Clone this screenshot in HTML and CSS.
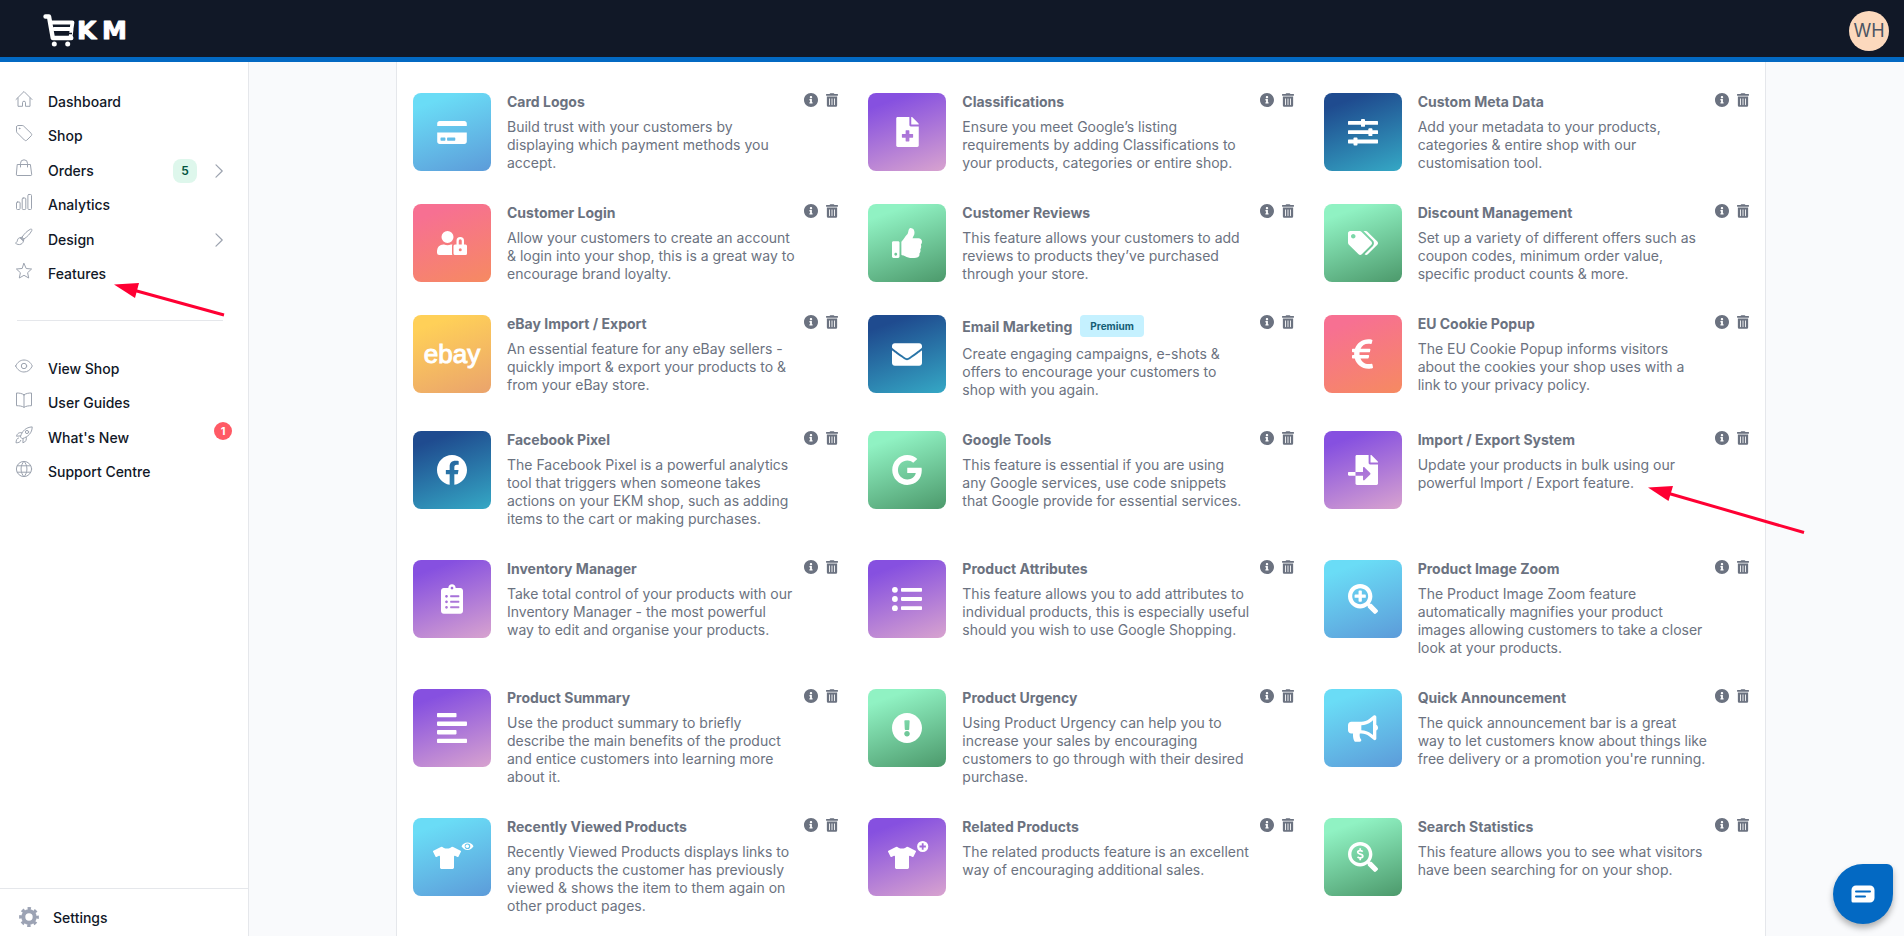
FILE: index.html
```html
<!DOCTYPE html>
<html lang="en">
<head>
<meta charset="utf-8">
<meta name="viewport" content="width=device-width, initial-scale=1">
<title>EKM - Features</title>
<link rel="stylesheet" href="styles.css">
</head>
<body>
<svg class="sprite" aria-hidden="true">
  <symbol id="info" viewBox="8 8 496 496"><path d="M256 8C119.043 8 8 119.083 8 256c0 136.997 111.043 248 248 248s248-111.003 248-248C504 119.083 392.957 8 256 8zm0 110c23.196 0 42 18.804 42 42s-18.804 42-42 42-42-18.804-42-42 18.804-42 42-42zm56 254c0 6.627-5.373 12-12 12h-88c-6.627 0-12-5.373-12-12v-24c0-6.627 5.373-12 12-12h12v-64h-12c-6.627 0-12-5.373-12-12v-24c0-6.627 5.373-12 12-12h64c6.627 0 12 5.373 12 12v100h12c6.627 0 12 5.373 12 12v24z"/></symbol>
  <symbol id="trash" viewBox="0 0 448 512"><path d="M32 464a48 48 0 0 0 48 48h288a48 48 0 0 0 48-48V128H32zm272-256a16 16 0 0 1 32 0v224a16 16 0 0 1-32 0zm-96 0a16 16 0 0 1 32 0v224a16 16 0 0 1-32 0zm-96 0a16 16 0 0 1 32 0v224a16 16 0 0 1-32 0zM432 32H312l-9.4-18.7A24 24 0 0 0 281.1 0H166.8a23.72 23.72 0 0 0-21.4 13.3L136 32H16A16 16 0 0 0 0 48v32a16 16 0 0 0 16 16h416a16 16 0 0 0 16-16V48a16 16 0 0 0-16-16z"/></symbol>
  <symbol id="shirt" viewBox="0 0 640 512"><path d="M631.2 96.5L436.5 0C416.4 27.8 371.9 47.2 320 47.2S223.6 27.8 203.5 0L8.8 96.5c-7.9 4-11.1 13.6-7.2 21.5l57.2 114.5c4 7.9 13.6 11.1 21.5 7.2l56.6-27.7c10.6-5.2 23 2.5 23 14.4V480c0 17.7 14.3 32 32 32h256c17.7 0 32-14.3 32-32V226.3c0-11.8 12.4-19.6 23-14.4l56.6 27.7c7.9 4 17.5.8 21.5-7.2L638.3 118c4-7.9.8-17.6-7.1-21.5z"/></symbol>
  <symbol id="chevron" viewBox="0 0 8 14"><path d="M1 .8 7.200 7 1 13.200" fill="none" stroke="currentColor" stroke-width="1.200" stroke-linecap="round" stroke-linejoin="round"/></symbol>
</svg>

<header class="topbar">
  <a class="brand" href="#" aria-label="EKM">
    <svg width="86" height="34" viewBox="0 0 86 34" aria-hidden="true">
      <g fill="none" stroke="#fff" stroke-linecap="round" stroke-linejoin="round">
        <path d="M2.500 2.500h3.500l3.800 21.500h18.500" stroke-width="4.400"/>
        <path d="M9 8.500h20.500l-1 6.500H11M28.600 15.500l-1.100 8" stroke-width="3.800"/>
      </g>
      <path d="M11 11.700h15.500M12 19.500h17" stroke="#111827" stroke-width="1.400"/>
      <circle cx="11.300" cy="30" r="2.500" fill="#fff"/><circle cx="24.700" cy="30" r="2.500" fill="#fff"/>
      <text class="brand-text" x="34 59" y="25">KM</text>
    </svg>
  </a>
  <button class="avatar" type="button" aria-label="Account">WH</button>
</header>

<div class="layout">
  <aside class="sidebar">
    <nav class="nav">
      <ul class="nav-list">
        <li><a class="nav-item" href="#"><svg class="nav-icon" viewBox="0 0 18 18"><path d="M1 9.500 9 1.500l8 8M3 8v8.300h4.500v-3.600a1.500 1.500 0 0 1 3 0v3.600H15V8"/></svg><span>Dashboard</span></a></li>
        <li><a class="nav-item" href="#"><svg class="nav-icon" viewBox="0 0 18 18"><path d="M1.500 3v4.200c0 .6.200 1.100.6 1.500l7.400 7.400c.7.700 1.700.7 2.400 0l4.300-4.300c.7-.7.700-1.700 0-2.400L8.700 2.100c-.4-.4-.9-.6-1.500-.6H3c-.8 0-1.500.7-1.500 1.500z"/><circle cx="4.500" cy="4.500" r=".4"/></svg><span>Shop</span></a></li>
        <li><a class="nav-item nav-item--tagged" href="#"><svg class="nav-icon" viewBox="0 0 18 18"><path d="M2.600 5.500h12.800l1.300 10c.1.500-.3 1-.8 1H2.100c-.5 0-.9-.5-.8-1zM5.500 8V4.300a3.500 3.500 0 0 1 7 0V8"/></svg><span>Orders</span><b class="count">5</b><svg class="chevron"><use href="#chevron"/></svg></a></li>
        <li><a class="nav-item" href="#"><svg class="nav-icon" viewBox="0 0 18 18"><rect x="1.500" y="9" width="3.600" height="7.500" rx="1"/><rect x="7.200" y="5" width="3.600" height="11.500" rx="1"/><rect x="12.900" y="1.500" width="3.600" height="15" rx="1"/></svg><span>Analytics</span></a></li>
        <li><a class="nav-item nav-item--tagged" href="#"><svg class="nav-icon" viewBox="0 0 18 18"><path d="M7 9.200C9.500 5.500 12 3 15.500 1.200c1-.5 1.800.4 1.300 1.300C15 6 12.500 8.700 8.900 11zM5.300 9.700 7 9.200l1.900 1.800-.4 1.800zM5.300 9.700c-1.600 0-2.500.9-2.800 2.400-.3 1.400-.7 2.300-2 3 1.300 1.300 3.700 2 5.600 1 1.500-.7 2.200-1.900 2.400-3.300z"/></svg><span>Design</span><svg class="chevron"><use href="#chevron"/></svg></a></li>
        <li><a class="nav-item" href="#"><svg class="nav-icon" viewBox="0 0 18 18"><path d="M9 1.500l2.200 5 5.400.5-4 3.700 1.100 5.300L9 13.300 4.300 16l1.100-5.300-4-3.700 5.400-.5z"/></svg><span>Features</span></a></li>
      </ul>
      <hr class="divider">
      <ul class="nav-list">
        <li><a class="nav-item" href="#"><svg class="nav-icon" viewBox="0 0 18 18"><path d="M.7 9C2.500 5 5.500 3 9 3s6.500 2 8.300 6c-1.800 4-4.800 6-8.300 6S2.500 13 .7 9z"/><circle cx="9" cy="9" r="2.700"/></svg><span>View Shop</span></a></li>
        <li><a class="nav-item" href="#"><svg class="nav-icon" viewBox="0 0 18 18"><path d="M9 3.800C7 2.400 4.500 2 1.500 2v12.700c3 0 5.500.4 7.500 1.600 2-1.200 4.500-1.600 7.500-1.600V2c-3 0-5.500.4-7.500 1.800zM9 3.800v12.500"/></svg><span>User Guides</span></a></li>
        <li><a class="nav-item nav-item--tagged" href="#"><svg class="nav-icon" viewBox="0 0 18 18"><path d="M5.500 10.500C7 5 11 1.200 17.200.9c-.1 6-4 10-9.700 11.700zM6.800 6.800c-2.500-.8-4.500.6-5.300 3.400l4-.3M11.200 11.200c.8 2.500-.5 4.800-3.300 5.600l.2-4.200M3.500 12c-1.800.3-2.300 2.300-2.500 4.800 2.500-.1 4.500-.5 4.800-2.400"/><circle cx="12" cy="6" r="1.600"/></svg><span>What's New</span><b class="alert">1</b></a></li>
        <li><a class="nav-item" href="#"><svg class="nav-icon" viewBox="0 0 18 18"><circle cx="9" cy="9" r="7.600"/><path d="M2.300 5.800h13.400M2.300 12.200h13.400M9 1.400C5 5 5 13 9 16.600M9 1.400c4 3.600 4 11.600 0 15.200"/></svg><span>Support Centre</span></a></li>
      </ul>
    </nav>
    <a class="settings" href="#">
      <svg width="20" height="20" viewBox="0 0 20 20" aria-hidden="true"><g fill="none" stroke="#9ca3b4"><circle cx="10" cy="10" r="5.700" stroke-width="4"/><circle cx="10" cy="10" r="8.300" stroke-width="3.200" stroke-dasharray="3.300 3.220" stroke-dashoffset="1.650"/></g></svg>
      <span>Settings</span>
    </a>
  </aside>

  <main class="main">
    <section class="panel">
      <article class="feature">
        <div class="tile tile--sky"><svg width="30" height="23" viewBox="0 32 576 448"><path d="M0 432c0 26.500 21.500 48 48 48h480c26.500 0 48-21.500 48-48V256H0v176zm192-68c0-6.600 5.400-12 12-12h136c6.600 0 12 5.400 12 12v40c0 6.600-5.400 12-12 12H204c-6.600 0-12-5.400-12-12v-40zm-128 0c0-6.600 5.400-12 12-12h72c6.600 0 12 5.400 12 12v40c0 6.600-5.400 12-12 12H76c-6.600 0-12-5.400-12-12v-40zM576 80v48H0V80c0-26.500 21.500-48 48-48h480c26.500 0 48 21.500 48 48z"/></svg></div>
        <div class="copy"><h3>Card Logos</h3><p>Build trust with your customers by displaying which payment methods you accept.</p></div>
        <div class="actions"><button type="button" aria-label="Information"><svg width="14" height="14"><use href="#info"/></svg></button><button type="button" aria-label="Delete"><svg width="12" height="14"><use href="#trash"/></svg></button></div>
      </article>
      <article class="feature">
        <div class="tile tile--violet"><svg width="23" height="30" viewBox="0 0 384 512"><path d="M384 121.900v6.100H256V0h6.100c6.400 0 12.500 2.500 17 7l97.900 98c4.500 4.500 7 10.600 7 16.900zM224 136V0H24C10.700 0 0 10.700 0 24v464c0 13.300 10.700 24 24 24h336c13.300 0 24-10.700 24-24V160H248c-13.200 0-24-10.800-24-24zm64 160v48c0 4.400-3.600 8-8 8h-56v56c0 4.400-3.600 8-8 8h-48c-4.400 0-8-3.600-8-8v-56h-56c-4.400 0-8-3.600-8-8v-48c0-4.400 3.600-8 8-8h56v-56c0-4.400 3.600-8 8-8h48c4.400 0 8 3.600 8 8v56h56c4.400 0 8 3.600 8 8z"/></svg></div>
        <div class="copy"><h3>Classifications</h3><p>Ensure you meet Google’s listing requirements by adding Classifications to your products, categories or entire shop.</p></div>
        <div class="actions"><button type="button" aria-label="Information"><svg width="14" height="14"><use href="#info"/></svg></button><button type="button" aria-label="Delete"><svg width="12" height="14"><use href="#trash"/></svg></button></div>
      </article>
      <article class="feature">
        <div class="tile tile--navy"><svg width="30" height="30" viewBox="0 0 30 30"><rect y="4" width="30" height="3.800" rx=".6"/><rect y="13.300" width="30" height="3.800" rx=".6"/><rect y="22.600" width="30" height="3.800" rx=".6"/><rect x="13" y="2" width="4" height="7.800" rx=".9"/><rect x="20.400" y="11.300" width="4" height="7.800" rx=".9"/><rect x="5.500" y="20.600" width="4" height="7.800" rx=".9"/></svg></div>
        <div class="copy"><h3>Custom Meta Data</h3><p>Add your metadata to your products, categories &amp; entire shop with our customisation tool.</p></div>
        <div class="actions"><button type="button" aria-label="Information"><svg width="14" height="14"><use href="#info"/></svg></button><button type="button" aria-label="Delete"><svg width="12" height="14"><use href="#trash"/></svg></button></div>
      </article>

      <article class="feature">
        <div class="tile tile--pink"><svg width="30" height="24" viewBox="0 0 640 512"><path d="M224 256A128 128 0 1 0 96 128a128 128 0 0 0 128 128zm96 64a63.080 63.080 0 0 1 8.100-30.500c-4.800-.5-9.500-1.500-14.500-1.500h-16.700a174.080 174.080 0 0 1-145.800 0h-16.700A134.430 134.430 0 0 0 0 422.400V464a48 48 0 0 0 48 48h280.900a63.540 63.540 0 0 1-8.900-32zm288-32h-32v-80a80 80 0 0 0-160 0v80h-32a32 32 0 0 0-32 32v160a32 32 0 0 0 32 32h224a32 32 0 0 0 32-32V320a32 32 0 0 0-32-32zM496 432a32 32 0 1 1 32-32 32 32 0 0 1-32 32zm32-144h-64v-80a32 32 0 0 1 64 0z"/></svg></div>
        <div class="copy"><h3>Customer Login</h3><p>Allow your customers to create an account &amp; login into your shop, this is a great way to encourage brand loyalty.</p></div>
        <div class="actions"><button type="button" aria-label="Information"><svg width="14" height="14"><use href="#info"/></svg></button><button type="button" aria-label="Delete"><svg width="12" height="14"><use href="#trash"/></svg></button></div>
      </article>
      <article class="feature">
        <div class="tile tile--green"><svg width="30" height="30" viewBox="0 0 512 512"><path d="M104 224H24c-13.255 0-24 10.745-24 24v240c0 13.255 10.745 24 24 24h80c13.255 0 24-10.745 24-24V248c0-13.255-10.745-24-24-24zM64 472c-13.255 0-24-10.745-24-24s10.745-24 24-24 24 10.745 24 24-10.745 24-24 24zM384 81.452c0 42.416-25.970 66.208-33.277 94.548h101.723c33.397 0 59.397 27.746 59.553 58.098.084 17.938-7.546 37.249-19.439 49.197l-.11.11c9.836 23.337 8.237 56.037-9.308 79.469 8.681 25.895-.069 57.704-16.382 74.757 4.298 17.598 2.244 32.575-6.148 44.632C440.202 511.587 389.616 512 346.839 512l-2.845-.001c-48.287-.017-87.806-17.598-119.560-31.725-15.957-7.099-36.821-15.887-52.651-16.178-6.540-.12-11.783-5.457-11.783-11.998v-213.770c0-3.200 1.282-6.271 3.558-8.521 39.614-39.144 56.648-80.587 89.117-113.111 14.804-14.832 20.188-37.236 25.393-58.902C282.515 39.293 291.817 0 312 0c24 0 72 8 72 81.452z"/></svg></div>
        <div class="copy"><h3>Customer Reviews</h3><p>This feature allows your customers to add reviews to products they’ve purchased through your store.</p></div>
        <div class="actions"><button type="button" aria-label="Information"><svg width="14" height="14"><use href="#info"/></svg></button><button type="button" aria-label="Delete"><svg width="12" height="14"><use href="#trash"/></svg></button></div>
      </article>
      <article class="feature">
        <div class="tile tile--green"><svg width="30" height="24" viewBox="0 0 640 512"><path d="M497.941 225.941L286.059 14.059A48 48 0 0 0 252.118 0H48C21.490 0 0 21.490 0 48v204.118a48 48 0 0 0 14.059 33.941l211.882 211.882c18.744 18.745 49.136 18.746 67.882 0l204.118-204.118c18.745-18.745 18.745-49.137 0-67.882zM112 160c-26.510 0-48-21.490-48-48s21.490-48 48-48 48 21.490 48 48-21.490 48-48 48zm513.941 133.823L421.823 497.941c-18.745 18.745-49.137 18.745-67.882 0l-.36-.36L527.640 323.522c16.999-16.999 26.362-39.600 26.362-63.640s-9.362-46.641-26.362-63.640L331.397 0h48.721a48 48 0 0 1 33.941 14.059l211.882 211.882c18.745 18.745 18.745 49.137 0 67.882z"/></svg></div>
        <div class="copy"><h3>Discount Management</h3><p>Set up a variety of different offers such as coupon codes, minimum order value, specific product counts &amp; more.</p></div>
        <div class="actions"><button type="button" aria-label="Information"><svg width="14" height="14"><use href="#info"/></svg></button><button type="button" aria-label="Delete"><svg width="12" height="14"><use href="#trash"/></svg></button></div>
      </article>

      <article class="feature">
        <div class="tile tile--amber"><span class="ebay">ebay</span></div>
        <div class="copy"><h3>eBay Import / Export</h3><p>An essential feature for any eBay sellers - quickly import &amp; export your products to &amp; from your eBay store.</p></div>
        <div class="actions"><button type="button" aria-label="Information"><svg width="14" height="14"><use href="#info"/></svg></button><button type="button" aria-label="Delete"><svg width="12" height="14"><use href="#trash"/></svg></button></div>
      </article>
      <article class="feature">
        <div class="tile tile--navy"><svg width="30" height="23" viewBox="0 64 512 384"><path d="M502.300 190.800c3.900-3.100 9.700-.2 9.700 4.700V400c0 26.500-21.500 48-48 48H48c-26.500 0-48-21.500-48-48V195.600c0-5 5.700-7.800 9.700-4.700 22.400 17.400 52.100 39.500 154.100 113.600 21.100 15.400 56.700 47.800 92.200 47.600 35.700.3 72-32.800 92.300-47.600 102-74.100 131.600-96.300 154-113.700zM256 320c23.200.4 56.600-29.200 73.400-41.400 132.700-96.300 142.800-104.700 173.400-128.700 5.800-4.500 9.200-11.500 9.200-18.900v-19c0-26.500-21.500-48-48-48H48c-26.500 0-48 21.500-48 48v19c0 7.400 3.400 14.300 9.200 18.900 30.600 23.900 40.700 32.400 173.400 128.700 16.800 12.200 50.200 41.800 73.400 41.400z"/></svg></div>
        <div class="copy"><h3>Email Marketing <span class="premium">Premium</span></h3><p>Create engaging campaigns, e-shots &amp; offers to encourage your customers to shop with you again.</p></div>
        <div class="actions"><button type="button" aria-label="Information"><svg width="14" height="14"><use href="#info"/></svg></button><button type="button" aria-label="Delete"><svg width="12" height="14"><use href="#trash"/></svg></button></div>
      </article>
      <article class="feature">
        <div class="tile tile--pink"><svg width="21" height="30" viewBox="0 32 320 448"><path d="M310.706 413.765c-1.314-6.630-7.835-10.872-14.424-9.369-10.692 2.439-27.422 5.413-45.426 5.413-56.763 0-101.929-34.790-121.461-85.449h113.689a12 12 0 0 0 11.708-9.369l6.373-28.360c1.686-7.502-4.019-14.631-11.708-14.631H115.220c-1.210-14.328-1.414-28.287.137-42.245H261.950a12 12 0 0 0 11.723-9.434l6.512-29.755c1.638-7.484-4.061-14.566-11.723-14.566H130.184c20.633-44.991 62.690-75.030 117.619-75.030 14.486 0 28.564 2.250 37.851 4.145 6.216 1.268 12.347-2.498 14.002-8.623l11.991-44.368c1.822-6.741-2.465-13.616-9.326-14.917C290.217 34.912 270.710 32 249.635 32 152.451 32 74.030 92.252 45.075 176H12c-6.627 0-12 5.373-12 12v29.755c0 6.627 5.373 12 12 12h21.569c-1.009 13.607-1.181 29.287-.181 42.245H12c-6.627 0-12 5.373-12 12v28.360c0 6.627 5.373 12 12 12h30.114C67.139 414.692 145.264 480 249.635 480c26.301 0 48.562-4.544 61.101-7.788 6.167-1.595 10.027-7.708 8.788-13.957l-8.818-44.490z"/></svg></div>
        <div class="copy"><h3>EU Cookie Popup</h3><p>The EU Cookie Popup informs visitors about the cookies your shop uses with a link to your privacy policy.</p></div>
        <div class="actions"><button type="button" aria-label="Information"><svg width="14" height="14"><use href="#info"/></svg></button><button type="button" aria-label="Delete"><svg width="12" height="14"><use href="#trash"/></svg></button></div>
      </article>

      <article class="feature">
        <div class="tile tile--navy"><svg width="30" height="30" viewBox="8 8 496 496"><path d="M504 256C504 119 393 8 256 8S8 119 8 256c0 123.780 90.690 226.380 209.250 245V327.690h-63V256h63v-54.640c0-62.150 37-96.480 93.670-96.480 27.140 0 55.520 4.840 55.520 4.840v61h-31.280c-30.800 0-40.410 19.120-40.410 38.730V256h68.780l-11 71.690h-57.780V501C413.310 482.380 504 379.780 504 256z"/></svg></div>
        <div class="copy"><h3>Facebook Pixel</h3><p>The Facebook Pixel is a powerful analytics tool that triggers when someone takes actions on your EKM shop, such as adding items to the cart or making purchases.</p></div>
        <div class="actions"><button type="button" aria-label="Information"><svg width="14" height="14"><use href="#info"/></svg></button><button type="button" aria-label="Delete"><svg width="12" height="14"><use href="#trash"/></svg></button></div>
      </article>
      <article class="feature">
        <div class="tile tile--green"><svg width="30" height="30" viewBox="0 8 488 496"><path d="M488 261.800C488 403.300 391.100 504 248 504 110.800 504 0 393.200 0 256S110.800 8 248 8c66.800 0 123 24.500 166.300 64.900l-67.500 64.900C258.500 52.600 94.300 116.600 94.300 256c0 86.500 69.100 156.600 153.700 156.600 98.200 0 135-70.400 140.800-106.900H248v-85.300h236.100c2.300 12.700 3.900 24.900 3.900 41.400z"/></svg></div>
        <div class="copy"><h3>Google Tools</h3><p>This feature is essential if you are using<br>any Google services, use code snippets that Google provide for essential services.</p></div>
        <div class="actions"><button type="button" aria-label="Information"><svg width="14" height="14"><use href="#info"/></svg></button><button type="button" aria-label="Delete"><svg width="12" height="14"><use href="#trash"/></svg></button></div>
      </article>
      <article class="feature">
        <div class="tile tile--violet"><svg width="30" height="30" viewBox="0 0 512 512"><path d="M16 288c-8.800 0-16 7.200-16 16v32c0 8.800 7.200 16 16 16h112v-64zm489-183L407.100 7c-4.500-4.500-10.600-7-17-7H384v128h128v-6.100c0-6.300-2.500-12.400-7-16.900zm-153 31V0H152c-13.300 0-24 10.700-24 24v264h128v-65.200c0-14.300 17.300-21.400 27.400-11.300L379 308c6.600 6.700 6.600 17.400 0 24l-95.700 96.400c-10.100 10.100-27.400 3-27.400-11.300V352H128v136c0 13.300 10.700 24 24 24h336c13.300 0 24-10.700 24-24V160H376c-13.200 0-24-10.800-24-24z"/></svg></div>
        <div class="copy"><h3>Import / Export System</h3><p>Update your products in bulk using our powerful Import / Export feature.</p></div>
        <div class="actions"><button type="button" aria-label="Information"><svg width="14" height="14"><use href="#info"/></svg></button><button type="button" aria-label="Delete"><svg width="12" height="14"><use href="#trash"/></svg></button></div>
      </article>

      <article class="feature">
        <div class="tile tile--violet"><svg width="22" height="30" viewBox="0 0 384 512"><path d="M336 64h-80c0-35.300-28.700-64-64-64s-64 28.700-64 64H48C21.500 64 0 85.500 0 112v352c0 26.500 21.500 48 48 48h288c26.500 0 48-21.500 48-48V112c0-26.500-21.500-48-48-48zM96 424c-13.300 0-24-10.700-24-24s10.700-24 24-24 24 10.700 24 24-10.700 24-24 24zm0-96c-13.300 0-24-10.700-24-24s10.700-24 24-24 24 10.700 24 24-10.700 24-24 24zm0-96c-13.300 0-24-10.700-24-24s10.700-24 24-24 24 10.700 24 24-10.700 24-24 24zm96-192c13.300 0 24 10.700 24 24s-10.700 24-24 24-24-10.700-24-24 10.700-24 24-24zm128 368c0 4.400-3.600 8-8 8H168c-4.400 0-8-3.600-8-8v-16c0-4.400 3.600-8 8-8h144c4.400 0 8 3.600 8 8v16zm0-96c0 4.400-3.600 8-8 8H168c-4.400 0-8-3.600-8-8v-16c0-4.400 3.600-8 8-8h144c4.400 0 8 3.600 8 8v16zm0-96c0 4.400-3.600 8-8 8H168c-4.400 0-8-3.600-8-8v-16c0-4.400 3.600-8 8-8h144c4.400 0 8 3.600 8 8v16z"/></svg></div>
        <div class="copy"><h3>Inventory Manager</h3><p>Take total control of your products with our Inventory Manager - the most powerful<br>way to edit and organise your products.</p></div>
        <div class="actions"><button type="button" aria-label="Information"><svg width="14" height="14"><use href="#info"/></svg></button><button type="button" aria-label="Delete"><svg width="12" height="14"><use href="#trash"/></svg></button></div>
      </article>
      <article class="feature">
        <div class="tile tile--violet"><svg width="30" height="30" viewBox="0 0 30 30"><circle cx="2.900" cy="5.800" r="2.900"/><circle cx="2.900" cy="15" r="2.900"/><circle cx="2.900" cy="24.200" r="2.900"/><rect x="9" y="3.900" width="21" height="3.800" rx=".8"/><rect x="9" y="13.100" width="21" height="3.800" rx=".8"/><rect x="9" y="22.300" width="21" height="3.800" rx=".8"/></svg></div>
        <div class="copy"><h3>Product Attributes</h3><p>This feature allows you to add attributes to individual products, this is especially useful should you wish to use Google Shopping.</p></div>
        <div class="actions"><button type="button" aria-label="Information"><svg width="14" height="14"><use href="#info"/></svg></button><button type="button" aria-label="Delete"><svg width="12" height="14"><use href="#trash"/></svg></button></div>
      </article>
      <article class="feature">
        <div class="tile tile--sky"><svg width="30" height="30" viewBox="0 0 512 512"><path d="M304 192v32c0 6.600-5.400 12-12 12h-56v56c0 6.600-5.400 12-12 12h-32c-6.600 0-12-5.400-12-12v-56h-56c-6.600 0-12-5.400-12-12v-32c0-6.600 5.400-12 12-12h56v-56c0-6.600 5.400-12 12-12h32c6.600 0 12 5.400 12 12v56h56c6.600 0 12 5.400 12 12zm201 284.700L476.700 505c-9.400 9.400-24.600 9.400-33.900 0L343 405.300c-4.500-4.500-7-10.600-7-17V372c-35.300 27.600-79.700 44-128 44C93.100 416 0 322.900 0 208S93.100 0 208 0s208 93.100 208 208c0 48.300-16.400 92.700-44 128h16.300c6.400 0 12.500 2.500 17 7l99.700 99.700c9.300 9.400 9.300 24.600 0 34zM344 208c0-75.200-60.800-136-136-136S72 132.800 72 208s60.800 136 136 136 136-60.800 136-136z"/></svg></div>
        <div class="copy"><h3>Product Image Zoom</h3><p>The Product Image Zoom feature automatically magnifies your product images allowing customers to take a closer look at your products.</p></div>
        <div class="actions"><button type="button" aria-label="Information"><svg width="14" height="14"><use href="#info"/></svg></button><button type="button" aria-label="Delete"><svg width="12" height="14"><use href="#trash"/></svg></button></div>
      </article>

      <article class="feature">
        <div class="tile tile--violet"><svg width="30" height="30" viewBox="0 0 30 30"><rect width="19.500" height="4.300" rx=".8"/><rect y="8.600" width="30" height="4.300" rx=".8"/><rect y="17.100" width="19.500" height="4.300" rx=".8"/><rect y="25.700" width="30" height="4.300" rx=".8"/></svg></div>
        <div class="copy"><h3>Product Summary</h3><p>Use the product summary to briefly describe the main benefits of the product and entice customers into learning more about it.</p></div>
        <div class="actions"><button type="button" aria-label="Information"><svg width="14" height="14"><use href="#info"/></svg></button><button type="button" aria-label="Delete"><svg width="12" height="14"><use href="#trash"/></svg></button></div>
      </article>
      <article class="feature">
        <div class="tile tile--green"><svg width="30" height="30" viewBox="8 8 496 496"><path d="M504 256c0 136.997-111.043 248-248 248S8 392.997 8 256C8 119.083 119.043 8 256 8s248 111.083 248 248zm-248 50c-25.405 0-46 20.595-46 46s20.595 46 46 46 46-20.595 46-46-20.595-46-46-46zm-43.673-165.346l7.418 136c.347 6.364 5.609 11.346 11.982 11.346h48.546c6.373 0 11.635-4.982 11.982-11.346l7.418-136c.375-6.874-5.098-12.654-11.982-12.654h-63.383c-6.884 0-12.356 5.780-11.981 12.654z"/></svg></div>
        <div class="copy"><h3>Product Urgency</h3><p>Using Product Urgency can help you to increase your sales by encouraging customers to go through with their desired purchase.</p></div>
        <div class="actions"><button type="button" aria-label="Information"><svg width="14" height="14"><use href="#info"/></svg></button><button type="button" aria-label="Delete"><svg width="12" height="14"><use href="#trash"/></svg></button></div>
      </article>
      <article class="feature">
        <div class="tile tile--sky"><svg width="30" height="27" viewBox="0 0 576 512"><path d="M576 240c0-23.630-12.950-44.040-32-55.120V32.010C544 23.260 537.020 0 512 0c-7.120 0-14.190 2.380-19.980 7.020l-85.030 68.030C364.280 109.190 310.660 128 256 128H64c-35.350 0-64 28.650-64 64v96c0 35.350 28.650 64 64 64h33.700c-1.390 10.480-2.180 21.140-2.180 32 0 39.770 9.260 77.350 25.560 110.940 5.190 10.690 16.520 17.060 28.400 17.060h74.280c26.050 0 41.690-29.840 25.900-50.560-16.400-21.520-26.150-48.360-26.150-77.440 0-11.110 1.620-21.790 4.410-32H256c54.660 0 108.280 18.810 150.980 52.950l85.030 68.030a32.023 32.023 0 0 0 19.980 7.020c24.920 0 32-22.780 32-32V295.130C563.050 284.040 576 263.630 576 240zm-96 141.420l-33.050-26.440C392.950 311.780 325.120 288 256 288v-96c69.120 0 136.950-23.780 190.950-66.980L480 98.580v282.840z"/></svg></div>
        <div class="copy"><h3>Quick Announcement</h3><p>The quick announcement bar is a great<br>way to let customers know about things like free delivery or a promotion you're running.</p></div>
        <div class="actions"><button type="button" aria-label="Information"><svg width="14" height="14"><use href="#info"/></svg></button><button type="button" aria-label="Delete"><svg width="12" height="14"><use href="#trash"/></svg></button></div>
      </article>

      <article class="feature">
        <div class="tile tile--sky"><svg width="78" height="78" viewBox="0 0 78 78"><use href="#shirt" x="20" y="28.500" width="28" height="22.400"/><path fill-rule="evenodd" d="M48.500 28.300c1.400-2.400 3.500-3.700 6-3.700s4.600 1.300 6 3.700c-1.400 2.400-3.500 3.700-6 3.700s-4.600-1.300-6-3.700zm6-2.800a2.800 2.800 0 1 0 0 5.600 2.800 2.800 0 0 0 0-5.600z"/><circle cx="54.300" cy="28.300" r="1.700"/></svg></div>
        <div class="copy"><h3>Recently Viewed Products</h3><p>Recently Viewed Products displays links to any products the customer has previously viewed &amp; shows the item to them again on other product pages.</p></div>
        <div class="actions"><button type="button" aria-label="Information"><svg width="14" height="14"><use href="#info"/></svg></button><button type="button" aria-label="Delete"><svg width="12" height="14"><use href="#trash"/></svg></button></div>
      </article>
      <article class="feature">
        <div class="tile tile--violet"><svg width="78" height="78" viewBox="0 0 78 78"><use href="#shirt" x="20" y="28.500" width="28" height="22.400"/><path fill-rule="evenodd" d="M54.700 22.900a5.600 5.600 0 1 0 0 11.200 5.600 5.600 0 0 0 0-11.200zm-.9 2.400h1.800v2.300h2.300v1.800h-2.300v2.300h-1.800v-2.300h-2.300v-1.800h2.300z"/></svg></div>
        <div class="copy"><h3>Related Products</h3><p>The related products feature is an excellent way of encouraging additional sales.</p></div>
        <div class="actions"><button type="button" aria-label="Information"><svg width="14" height="14"><use href="#info"/></svg></button><button type="button" aria-label="Delete"><svg width="12" height="14"><use href="#trash"/></svg></button></div>
      </article>
      <article class="feature">
        <div class="tile tile--green"><svg width="30" height="30" viewBox="0 0 512 512"><path d="M505 476.700L476.700 505c-9.400 9.400-24.600 9.400-33.900 0L343 405.300c-4.500-4.500-7-10.600-7-17V372c-35.300 27.600-79.700 44-128 44C93.100 416 0 322.900 0 208S93.100 0 208 0s208 93.100 208 208c0 48.300-16.400 92.700-44 128h16.300c6.400 0 12.500 2.500 17 7l99.700 99.700c9.300 9.400 9.300 24.600 0 34zM358 208c0-83-67-150-150-150S58 125 58 208s67 150 150 150 150-67 150-150z"/><path d="M252 165c-14-13-29-17-46-17-24 0-40 11-40 29 0 40 87 22 87 64 0 19-17 31-42 31-20 0-35-6-49-19M208 106v42M208 270v42" fill="none" stroke="#fff" stroke-width="30"/></svg></div>
        <div class="copy"><h3>Search Statistics</h3><p>This feature allows you to see what visitors have been searching for on your shop.</p></div>
        <div class="actions"><button type="button" aria-label="Information"><svg width="14" height="14"><use href="#info"/></svg></button><button type="button" aria-label="Delete"><svg width="12" height="14"><use href="#trash"/></svg></button></div>
      </article>
    </section>
  </main>
</div>

<svg class="arrow arrow--features" width="112" height="36" viewBox="0 0 112 36" aria-hidden="true"><path d="M1 3.500 26 2l-4 15z" fill="#ff0033"/><path d="M22 9.500l89 24.500" stroke="#ff0033" stroke-width="3"/></svg>
<svg class="arrow arrow--import" width="160" height="52" viewBox="0 0 160 52" aria-hidden="true"><path d="M1 2.500 26 1l-4.500 15z" fill="#ff0033"/><path d="M22 8.500l135 39" stroke="#ff0033" stroke-width="3"/></svg>

<button class="chat" type="button" aria-label="Open chat">
  <svg width="24" height="18" viewBox="0 0 24 18" aria-hidden="true"><path fill="#fff" d="M5 .5h14a4.500 4.500 0 0 1 4.500 4.500v8a4.500 4.500 0 0 1-4.500 4.500H2A1.500 1.500 0 0 1 .5 16V5A4.500 4.500 0 0 1 5 .5z"/><path d="M5 6.500h14M5 11.500h9" stroke="#0369c3" stroke-width="2" stroke-linecap="round"/></svg>
</button>
</body>
</html>
```
FILE: styles.css
```css
* { box-sizing: border-box; }

body {
  margin: 0;
  height: 100vh;
  display: flex;
  flex-direction: column;
  overflow: hidden;
  background: #f9fafc;
  color: #111827;
  font: 400 14px/18px Inter, "Liberation Sans", sans-serif;
}

a { color: inherit; text-decoration: none; }

button {
  border: 0;
  padding: 0;
  background: none;
  color: inherit;
  font: inherit;
  cursor: pointer;
}

.sprite { position: absolute; width: 0; height: 0; }

/* Top bar */
.topbar {
  flex: none;
  display: flex;
  align-items: center;
  justify-content: space-between;
  height: 62px;
  padding: 4px 15px 0 43px;
  background: #111827;
  border-bottom: 5px solid #0369c3;
}
.brand svg { display: block; }
.brand-text {
  fill: #fff;
  stroke: #fff;
  stroke-width: 1;
  stroke-linejoin: round;
  font: 700 25px "DejaVu Sans", sans-serif;
}
.avatar {
  width: 40px;
  height: 40px;
  border-radius: 50%;
  background: #fcd9bd;
  color: #4b5563;
  font-size: 18px;
}

/* Sidebar */
.layout { flex: 1; display: flex; min-height: 0; }
.sidebar {
  flex: none;
  display: flex;
  flex-direction: column;
  justify-content: space-between;
  width: 249px;
  background: #fff;
  border-right: 1px solid #e5e7eb;
  font-weight: 500;
}
.nav { padding: 23px 25px 0 15px; }
.nav-list { margin: 0; padding: 0; list-style: none; }
.nav-item {
  position: relative;
  display: flex;
  align-items: center;
  height: 34px;
}
.nav-item--tagged { height: 35px; }
.nav-icon {
  width: 18px;
  height: 18px;
  margin: 0 15px 6px 0;
  fill: none;
  stroke: #9ca3af;
  stroke-width: 1;
  stroke-linejoin: round;
  stroke-linecap: round;
}
.chevron { width: 8px; height: 14px; margin-left: auto; color: #9ca3af; }
.count {
  width: 24px;
  margin: 0 18px 0 auto;
  border-radius: 8px;
  background: #def7ec;
  color: #03543f;
  font-size: 12px;
  font-weight: 600;
  line-height: 24px;
  text-align: center;
}
.count + .chevron { margin-left: 0; }
.alert {
  position: absolute;
  top: 2px;
  right: -9px;
  width: 18px;
  border-radius: 50%;
  background: #ff5a65;
  color: #fff;
  font-size: 11px;
  font-weight: 700;
  text-align: center;
}
.divider { height: 1px; margin: 29px 0 31px 2px; border: 0; background: #e5e7eb; }
.settings {
  display: flex;
  align-items: center;
  gap: 14px;
  padding: 18px 19px 9px;
  border-top: 1px solid #e5e7eb;
}
.settings span { padding-top: 2px; }

/* Feature list */
.main { flex: 1; min-width: 0; padding: 0 138px 0 147px; }
.panel {
  display: grid;
  grid-template-columns: repeat(3, 1fr);
  align-content: start;
  gap: 32px 30px;
  min-height: 100%;
  padding: 31px 16px;
  background: #fff;
  border: solid #e5e7eb;
  border-width: 0 1px;
}
.feature { display: flex; align-items: flex-start; color: #6b7280; }
.tile {
  flex: none;
  display: flex;
  align-items: center;
  justify-content: center;
  width: 78px;
  height: 78px;
  margin-right: 16px;
  border-radius: 8px;
  fill: #fff;
}
.tile--sky { background: linear-gradient(160deg, #6adcf6 15%, #5c9bd9); }
.tile--violet { background: linear-gradient(160deg, #8650e0 15%, #d8a3cf); }
.tile--navy { background: linear-gradient(160deg, #1f4b8f 15%, #35a8c5); }
.tile--pink { background: linear-gradient(160deg, #f77092 15%, #f68a61); }
.tile--green { background: linear-gradient(160deg, #90f2c3 15%, #4c996b); }
.tile--amber { background: linear-gradient(160deg, #ffd058 15%, #eaa36c); }
.ebay {
  color: #fff;
  font: 26px/30px "Liberation Sans", sans-serif;
  -webkit-text-stroke: 1px #fff;
}
.copy { flex: 1; min-width: 0; }
.copy h3 {
  display: flex;
  align-items: center;
  gap: 8px;
  margin: 0 0 8px;
  font-size: 14px;
  font-weight: 700;
  line-height: 17px;
}
.copy p { margin: 0; }
.premium {
  padding: 0 10px;
  border-radius: 4px;
  background: #c5f1ff;
  color: #155e75;
  font-size: 10px;
  font-weight: 700;
  line-height: 22px;
}
.actions { display: flex; gap: 8px; margin-left: 7px; fill: #6b7280; }
.actions svg { display: block; }

/* Overlays */
.arrow { position: absolute; fill: none; }
.arrow--features { left: 113px; top: 281px; }
.arrow--import { left: 1647px; top: 485px; }
.chat {
  position: fixed;
  right: 11px;
  bottom: 12px;
  display: flex;
  align-items: center;
  justify-content: center;
  width: 60px;
  height: 60px;
  border-radius: 30px 6px 30px 30px;
  background: #0369c3;
  box-shadow: 0 4px 6px rgba(0, 0, 0, 0.3);
}
```
